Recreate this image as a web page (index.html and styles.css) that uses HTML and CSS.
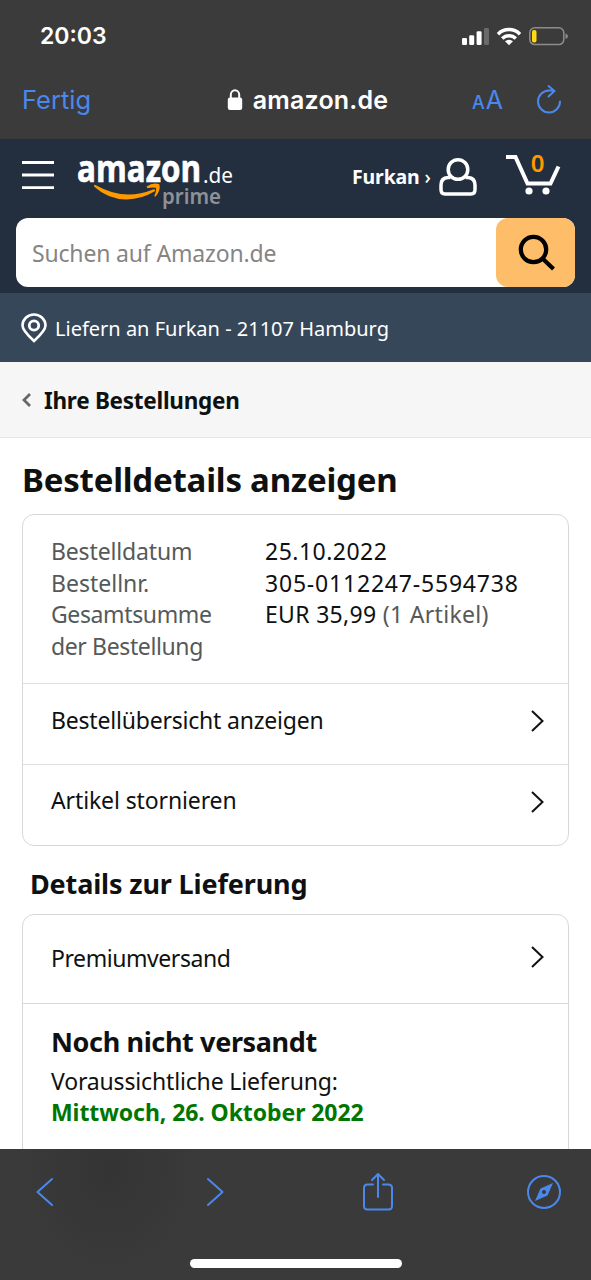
FILE: index.html
```html
<!DOCTYPE html>
<html lang="de">
<head>
<meta charset="utf-8">
<title>Bestelldetails</title>
<link rel="stylesheet" href="styles.css">
</head>
<body>
<div class="phone">
  <div class="status">
    <span class="clock">20:03</span>
    <svg class="status-icons" width="108" height="22" viewBox="0 0 108 22">
      <g fill="#fff">
        <rect x="1" y="13" width="5" height="7" rx="1.3"/>
        <rect x="8.200" y="10.200" width="5" height="9.800" rx="1.300"/>
        <rect x="15.600" y="6.300" width="5" height="13.700" rx="1.300"/>
      </g>
      <rect x="23" y="3" width="5" height="17" rx="1.300" fill="#6a6a6a"/>
      <g fill="none" stroke="#fff" stroke-width="3.500">
        <path d="M37 9.200a15.500 15.500 0 0 1 22 0"/>
        <path d="M41.200 13.500a9.500 9.500 0 0 1 13.600 0"/>
      </g>
      <path d="M44 16.200a6 6 0 0 1 8 0L48 20.300z" fill="#fff"/>
      <rect x="68.800" y="2.800" width="34" height="16.800" rx="5" fill="none" stroke="#8d8d8d" stroke-width="1.500"/>
      <rect x="71" y="5" width="4.500" height="12.400" rx="2" fill="#ffd911"/>
      <path d="M104.500 8.500q2.400 .6 2.400 2.700t-2.400 2.700z" fill="#8d8d8d"/>
    </svg>
  </div>
  <div class="address">
    <span class="done">Fertig</span>
    <div class="site">
      <svg width="16" height="22" viewBox="0 0 16 22"><rect x=".8" y="8.500" width="14.400" height="12.500" rx="2.200" fill="#fff"/><path d="M3.800 10V6a4.200 4.700 0 0 1 8.400 0V10" fill="none" stroke="#fff" stroke-width="2"/></svg>
      <span class="domain">amazon.de</span>
    </div>
    <div class="tools">
      <span class="size"><small>A</small>A</span>
      <svg width="26" height="32" viewBox="0 0 26 32" fill="none" stroke="#4a88ee" stroke-width="2" stroke-linecap="round" stroke-linejoin="round"><path d="M24 17.500A11 11 0 1 1 13 6.500H18M12.500 2L18.500 7L12.500 12.500"/></svg>
    </div>
  </div>

  <header class="nav">
    <div class="nav-top">
      <svg class="burger" width="33" height="30" viewBox="0 0 33 30" stroke="#fff" stroke-width="2.800"><path d="M0 2.500H32M0 15H32M0 27.700H32"/></svg>
      <svg class="logo" width="165" height="60" viewBox="0 0 165 60">
        <text class="logo-name" x="1" y="29.700" textLength="124" lengthAdjust="spacingAndGlyphs">amazon</text>
        <text class="logo-tld" x="127" y="31" textLength="30" lengthAdjust="spacingAndGlyphs">.de</text>
        <text class="logo-prime" x="86" y="52" textLength="59" lengthAdjust="spacingAndGlyphs">prime</text>
        <path d="M19.500 33Q48 49.500 77 37.500Q80 36.800 78.800 39.300Q65 47.600 50 47.400Q32 47.300 18.300 34.800Q17.300 32.300 19.500 33Z" fill="#f90"/>
        <path d="M70.500 34.500Q77 30 83.300 32.200Q85 37.500 80 44Q78.500 45.500 78.400 43.500Q81 38 79.800 35.800Q77 34.800 71.500 36.300Z" fill="#f90"/>
      </svg>
      <div class="account">
        <span class="user">Furkan <i>›</i></span>
        <svg width="38" height="38" viewBox="0 0 38 38" fill="none" stroke="#fff" stroke-width="3.500"><circle cx="19" cy="11.500" r="9.800"/><path d="M11.500 19.500H9Q2 20 2 27V31.500Q2 36 6 36H32Q36 36 36 31.500V27Q36 20 29 19.500H26.500"/></svg>
      </div>
      <svg class="cart" width="56" height="46" viewBox="0 0 56 46">
        <path d="M0 6H9.500L21.500 32.500H44.500L52.500 15.500" fill="none" stroke="#fff" stroke-width="4"/>
        <circle cx="23" cy="40" r="3.600" fill="#fff"/><circle cx="40" cy="40" r="3.600" fill="#fff"/>
        <text class="cart-count" x="31.500" y="20.500" text-anchor="middle">0</text>
      </svg>
    </div>
    <div class="search">
      <span class="hint">Suchen auf Amazon.de</span>
      <div class="go"><svg width="38" height="38" viewBox="0 0 38 38" fill="none" stroke="#000" stroke-width="4.200"><circle cx="16.500" cy="15.500" r="12.700"/><path d="M25.500 24.500L36.500 35"/></svg></div>
    </div>
  </header>

  <div class="deliver">
    <svg width="26" height="30" viewBox="0 0 26 30" fill="none" stroke="#fff"><path d="M13 28Q1.500 17.500 1.500 12.500A11.500 11 0 0 1 24.500 12.500Q24.500 17.500 13 28Z" stroke-width="2.600"/><circle cx="13" cy="12.500" r="4.700" stroke-width="2.800"/></svg>
    <span class="place">Liefern an Furkan - 21107 Hamburg</span>
  </div>

  <div class="crumb">
    <svg width="9" height="14" viewBox="0 0 9 14" fill="none" stroke="#666" stroke-width="2.800"><path d="M8 1L2 7L8 13"/></svg>
    <span class="back">Ihre Bestellungen</span>
  </div>

  <main class="content">
    <h1><span class="title">Bestelldetails anzeigen</span></h1>
    <section class="card">
      <dl class="facts">
        <dt><span class="f1">Bestelldatum</span></dt><dd><span class="v1">25.10.2022</span></dd>
        <dt><span class="f2">Bestellnr.</span></dt><dd><span class="v2">305-0112247-5594738</span></dd>
        <dt><span class="f3">Gesamtsumme<br>der Bestellung</span></dt><dd><span class="v3">EUR 35,99 <em>(1 Artikel)</em></span></dd>
      </dl>
      <div class="row overview"><span class="r1">Bestellübersicht anzeigen</span><svg class="chev" viewBox="0 0 13 22"><path d="M1 1L11.500 11L1 21"/></svg></div>
      <div class="row cancel"><span class="r2">Artikel stornieren</span><svg class="chev" viewBox="0 0 13 22"><path d="M1 1L11.500 11L1 21"/></svg></div>
    </section>
    <h2><span class="subtitle">Details zur Lieferung</span></h2>
    <section class="card open">
      <div class="row premium"><span class="r3">Premiumversand</span><svg class="chev" viewBox="0 0 13 22"><path d="M1 1L11.500 11L1 21"/></svg></div>
      <div class="shipment">
        <h3><span class="state">Noch nicht versandt</span></h3>
        <p><span class="eta">Voraussichtliche Lieferung:</span></p>
        <p class="date"><span class="day">Mittwoch, 26. Oktober 2022</span></p>
      </div>
    </section>
  </main>

  <footer class="toolbar">
    <div class="buttons">
      <svg width="20" height="32" viewBox="0 0 20 32"><path d="M17 3L2.500 16L17 29"/></svg>
      <svg class="forward" width="20" height="32" viewBox="0 0 20 32"><path d="M3 3L17.500 16L3 29"/></svg>
      <svg class="share" width="32" height="40" viewBox="0 0 32 40"><path d="M11 12.500H5.500Q2 12.500 2 16V34Q2 37.500 5.500 37.500H26.500Q30 37.500 30 34V16Q30 12.500 26.500 12.500H21M16 25V2.500M10 8L16 2L22 8"/></svg>
      <svg class="compass" width="36" height="36" viewBox="0 0 36 36"><circle cx="18" cy="18" r="16"/><path class="solid" fill-rule="evenodd" d="M27 9L21.500 21.500L9 27L14.500 14.500ZM18 16A2 2 0 1 0 18 20A2 2 0 1 0 18 16Z"/></svg>
    </div>
    <div class="home"></div>
  </footer>
</div>
</body>
</html>
```
FILE: styles.css
```css
* { box-sizing: border-box; }
body { margin: 0; background: #fff; color: #0f1111; font-family: "Noto Sans", sans-serif; font-size: 23px; }
h1, h2, h3, p, dl, dt, dd { margin: 0; }
svg { display: block; flex: none; overflow: visible; }
span { white-space: nowrap; }
.phone { width: 591px; height: 1280px; display: flex; flex-direction: column; overflow: hidden; }

.status { height: 73px; flex: none; background: #3b3b3b; color: #fff; display: flex; justify-content: space-between; align-items: center; padding: 0 22px 1px 40px; font-family: Inter, sans-serif; }
.clock { font-size: 23px; font-weight: 600; }
.address { height: 66px; flex: none; background: #3b3b3b; display: grid; grid-template-columns: 1fr auto 1fr; align-items: center; padding: 0 29px 13px 22px; font-family: Inter, sans-serif; color: #4a88ee; }
.done { font-size: 25.500px; }
.site { display: flex; align-items: center; gap: 10px; color: #fff; margin-left: 31px; }
.domain { font-size: 25px; font-weight: 600; letter-spacing: .2px; }
.tools { display: flex; justify-content: flex-end; align-items: center; gap: 33px; }
.size { font-size: 25px; }
.size small { font-size: 18px; margin-right: 1px; font-weight: 500; }

.nav { height: 154px; flex: none; background: #232f3e; }
.nav-top { height: 79px; display: flex; padding-left: 22px; color: #fff; }
.burger { margin-top: 21px; }
.logo { margin: 13px 0 0 21px; }
.logo-name { font: bold 38px "Open Sans", sans-serif; fill: #fff; stroke: #fff; stroke-width: .7px; }
.logo-tld { font: 21px "Noto Sans", sans-serif; fill: #fff; }
.logo-prime { font: 600 21px "Noto Sans", sans-serif; fill: #8e9296; }
.account { display: flex; gap: 7px; margin: 19px 0 0 111px; height: 38px; align-items: center; }
.user { font-size: 19.500px; font-weight: 700; width: 80px; letter-spacing: -.15px; padding-bottom: 1px; }
.user i { font-style: normal; font-weight: 500; }
.cart { margin: 12px 0 0 29px; }
.cart-count { font: 600 24px "Noto Sans", sans-serif; fill: #f90; }
.search { margin: 0 16px; height: 69px; background: #fff; border-radius: 12px; display: flex; justify-content: space-between; align-items: center; padding-left: 16px; }
.hint { color: #858585; letter-spacing: -.17px; }
.go { width: 79px; height: 69px; background: #febd69; border-radius: 12px; display: grid; place-items: center; }

.deliver { height: 69px; flex: none; background: #37475a; color: #fff; display: flex; align-items: center; gap: 8px; padding-left: 21px; font-size: 20px; }
.place { padding-top: 2px; }
.crumb { height: 76px; flex: none; background: #f6f6f6; border-bottom: 1.500px solid #e5e5e5; display: flex; align-items: center; gap: 13px; padding: 1px 0 0 22px; font-weight: 700; font-size: 22.500px; letter-spacing: -.27px; }

.content { height: 711px; flex: none; overflow: hidden; padding: 0 22px; }
h1 { height: 76px; padding-top: 18px; font-size: 33px; line-height: 48px; letter-spacing: -.22px; }
.card { border: 1.500px solid #d5d9d9; border-radius: 12px; }
.facts { height: 168px; display: grid; grid-template-columns: 214px 1fr; grid-template-rows: 31.500px 31.500px 63px; padding: 21px 0 0 28px; line-height: 31.500px; }
dt, em { color: #565959; font-style: normal; }
.f1 { letter-spacing: -.15px; }
.f3 { letter-spacing: -.38px; }
.v1 { letter-spacing: .48px; }
.v2 { letter-spacing: .8px; }
.v3 { letter-spacing: .31px; }
.row { display: flex; align-items: center; justify-content: space-between; padding: 0 24px 0 28px; }
.overview { height: 81px; border-top: 1.500px solid #e0e0e0; padding-bottom: 6px; }
.cancel { height: 81px; border-top: 1.500px solid #e0e0e0; padding-bottom: 6px; }
.r1 { letter-spacing: -.2px; padding-bottom: 2px; }
.r2 { letter-spacing: -.12px; padding-bottom: 4px; }
.r3 { letter-spacing: -.43px; padding-top: 2px; }
.chev { width: 13px; height: 22px; fill: none; stroke: #111; stroke-width: 2; }
h2 { height: 68px; padding: 18px 0 0 8px; font-size: 27px; line-height: 40px; letter-spacing: -.15px; }
.open { border-radius: 12px 12px 0 0; height: 300px; }
.premium { height: 88px; padding-bottom: 5px; }
.shipment { border-top: 1.500px solid #d5d9d9; padding: 18px 0 0 28px; line-height: 31px; }
h3 { font-size: 27px; line-height: 40px; height: 44px; letter-spacing: -.37px; }
.eta { letter-spacing: -.16px; }
.date { color: #007600; font-weight: 700; letter-spacing: -.08px; }

.toolbar { height: 131px; flex: none; background: radial-gradient(ellipse 90px 110px at 110px 20px, #343434, #3a3a3a); display: flex; flex-direction: column; align-items: center; justify-content: space-between; padding: 23px 0 12px; }
.buttons { width: 100%; display: flex; align-items: center; padding-left: 35px; }
.buttons svg { fill: none; stroke: #4a88ee; stroke-width: 2; stroke-linecap: round; stroke-linejoin: round; }
.buttons .forward { margin-left: 150px; }
.buttons .share { margin-left: 137px; }
.buttons .compass { margin-left: 132px; }
.buttons .solid { fill: #4a88ee; stroke: none; }
.home { width: 212px; height: 9px; border-radius: 5px; background: #fff; }
```
